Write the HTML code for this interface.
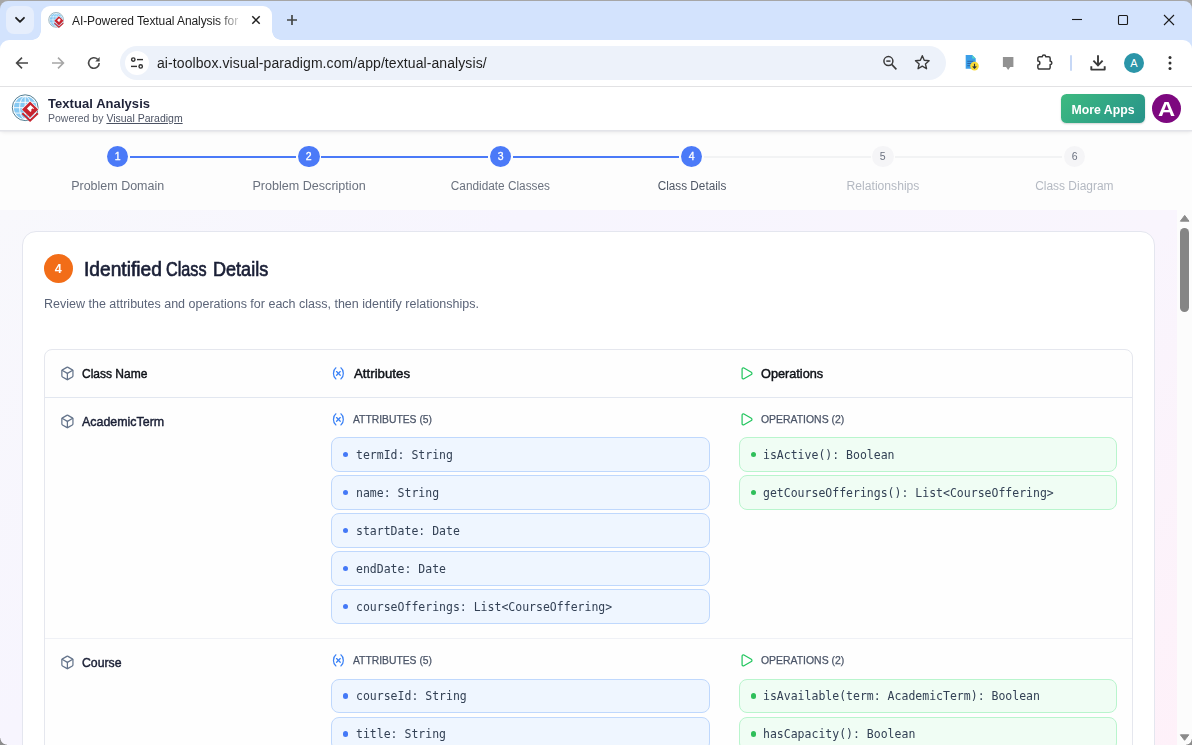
<!DOCTYPE html>
<html lang="en">
<head>
<meta charset="utf-8">
<title>AI-Powered Textual Analysis for</title>
<style>
*{box-sizing:border-box;margin:0;padding:0}
html,body{width:1192px;height:745px;overflow:hidden;background:#fff}
body{font-family:"Liberation Sans",sans-serif;color:#1f2937;position:relative}
.abs{position:absolute}
#tabtitle,#url,#apptitle,#appsub,#moretxt,#avtxt,.sn,.slab,#badgetxt,#h1,#desc,.th,.cn,.sub{will-change:transform}
/* ---------- browser chrome ---------- */
#tabstrip{left:0;top:1px;width:1192px;height:52px;background:#d3e3fd;border-radius:8px 8px 0 0}
#tabsearch{left:6px;top:6px;width:28px;height:28px;border-radius:8px;background:#e6eefc}
#tab{left:40.5px;top:6px;width:231px;height:34px;background:#fff;border-radius:9px 9px 0 0}
#tab:before,#tab:after{content:"";position:absolute;bottom:0;width:9px;height:9px}
#tab:before{left:-9px;background:radial-gradient(circle at 0 0,rgba(255,255,255,0) 8.5px,#fff 9px)}
#tab:after{right:-9px;background:radial-gradient(circle at 100% 0,rgba(255,255,255,0) 8.5px,#fff 9px)}
#tabtitle{left:71.7px;top:10.9px;line-height:20px;font-size:12px;letter-spacing:-.08px;color:#1f1f1f;white-space:nowrap;width:168px;overflow:hidden;-webkit-mask-image:linear-gradient(90deg,#000 0,#000 146px,rgba(0,0,0,.15) 168px);mask-image:linear-gradient(90deg,#000 0,#000 146px,rgba(0,0,0,.15) 168px)}
#toolbar{left:0;top:40px;width:1192px;height:46px;background:#fff;border-radius:9px 9px 0 0}
#tbline{left:0;top:86px;width:1192px;height:1px;background:#e2e2e4}
#omni{left:119.8px;top:46px;width:826.2px;height:34px;border-radius:17px;background:#edf2fa}
#sitebtn{left:124.8px;top:50.8px;width:24.2px;height:24.2px;border-radius:12.1px;background:#fff}
#url{left:157px;top:52.6px;line-height:20px;font-size:14px;color:#1f1f1f;white-space:nowrap;letter-spacing:.085px}
/* ---------- app header ---------- */
#apphead{left:0;top:87px;width:1192px;height:42.6px;background:#fff;box-shadow:0 1.5px 0 #e3e4e9,0 3px 4px -1px rgba(0,0,0,.10)}
#apptitle{left:48.4px;top:93.7px;line-height:20px;font-size:13px;font-weight:bold;color:#1e2238;white-space:nowrap;letter-spacing:.06px}
#appsub{left:48.4px;top:107.9px;line-height:20px;font-size:10.5px;color:#5b6170;white-space:nowrap}
#appsub u{color:#4b5263}
#moreapps{left:1061px;top:94px;width:84px;height:29px;border-radius:5.5px;background:linear-gradient(135deg,#3dba80,#27938a);box-shadow:0 1px 2px rgba(0,0,0,.18)}
#moretxt{left:1061px;width:84px;top:99.9px;line-height:20px;color:#fff;font-weight:bold;font-size:12.3px;text-align:center;white-space:nowrap}
#avatar{left:1152px;top:94px;width:29px;height:29px;border-radius:15px;background:#7d087f}
#avtxt{left:1152px;width:29px;top:99px;line-height:20px;color:#fff;font-weight:bold;font-size:21px;text-align:center;transform:scaleX(1.13)}
/* ---------- stepper ---------- */
#stepper{left:0;top:129px;width:1192px;height:81px;background:#fdfdfd}
.sx{display:inline-block;transform-origin:50% 50%;white-space:nowrap}
.sx.l{transform-origin:0 50%}
.sc{width:21.4px;height:21.4px;border-radius:11px;top:145.7px}
.sc.on{background:#4b7af8}
.sc.off{background:#f5f5f7}
.sn{width:21.4px;top:146px;line-height:20px;font-size:10.5px;text-align:center}
.sn.on{color:#fff;-webkit-text-stroke:.3px #fff}
.sn.off{color:#6b7280}
.sl{height:2px;top:155.9px}
.sl.on{background:#4b7af8}
.sl.off{background:#f2f3f4;top:156.2px;height:1.5px}
.slab{top:175.6px;width:160px;line-height:20px;text-align:center;font-size:12px;white-space:nowrap}
.slab.on{color:#6a717e}
.slab.cur{color:#4f5765}
.slab.off{color:#b4b9c2}
/* ---------- content ---------- */
#content{left:0;top:210px;width:1177px;height:535px;background:linear-gradient(135deg,#f8f8fc 0%,#f7f5fe 31%,#f9f5fd 69%,#fef1f9 100%)}
#card{left:22.4px;top:231.4px;width:1132.8px;height:540px;background:#fff;border:1px solid #e4e6ef;border-radius:14px}
#badge{left:44.2px;top:254.2px;width:28.6px;height:28.6px;border-radius:15px;background:#f26d18}
#badgetxt{left:44.2px;width:28.6px;top:258.7px;line-height:20px;color:#fff;font-weight:bold;font-size:12.5px;text-align:center}
#h1{left:84.3px;top:258.9px;line-height:20px;font-size:19.5px;color:#1a1f36;-webkit-text-stroke:.65px #1a1f36;white-space:nowrap}
#desc{left:44.4px;top:294.1px;line-height:20px;font-size:12.5px;color:#5b6478;white-space:nowrap}
#table{left:44.4px;top:349.4px;width:1088.4px;height:420px;border:1px solid #e5e7ee;border-radius:8px 8px 0 0;background:#fefefe}
.hline{left:45.4px;width:1086.4px;height:1px;background:#e2e7f0}
.th,.cn{line-height:20px;font-size:13px;color:#0f1218;-webkit-text-stroke:.45px #0f1218;white-space:nowrap}
.cn{color:#1b2036;-webkit-text-stroke:.45px #1b2036}
.sub{line-height:20px;font-size:11px;color:#4a5467;-webkit-text-stroke:.25px #4a5467;white-space:nowrap}
.pill{height:34.5px;border-radius:8px;font-family:"DejaVu Sans Mono","Liberation Mono",monospace;font-size:11.5px;color:#334155;white-space:nowrap}
.pill.a{left:331px;width:378.8px;background:#eff6ff;border:1px solid #bfd8fd}
.pill.o{left:739px;width:378px;background:#f0fdf4;border:1px solid #b9f5cd}
.pill i{position:absolute;left:10.8px;top:13.8px;width:5.4px;height:5.4px;border-radius:3px}
.pill.a i{background:#4479f7}
.pill.o i{background:#2fbf5a}
.pill span{position:absolute;left:24px;top:6.9px;line-height:20px;will-change:transform}
.pill.o span{left:23px}
/* ---------- scrollbar ---------- */
#sbar{left:1177px;top:210px;width:15px;height:535px;background:#fcfcfc}
#sthumb{left:1180.2px;top:228.3px;width:9px;height:83.6px;border-radius:4.5px;background:#858585}
svg{position:absolute;overflow:visible}
</style>
</head>
<body>
<!-- browser chrome -->
<div class="abs" style="left:0;top:0;width:1192px;height:40px;background:#a6a6a6"></div>
<div id="tabstrip" class="abs"></div>
<div id="tabsearch" class="abs"></div>
<div id="toolbar" class="abs"></div>
<div id="tab" class="abs"></div>
<div id="tabtitle" class="abs">AI-Powered Textual Analysis for</div>
<div id="tbline" class="abs"></div>
<div id="omni" class="abs"></div>
<div id="sitebtn" class="abs"></div>
<div id="url" class="abs">ai-toolbox.visual-paradigm.com/app/textual-analysis/</div>


<!-- chrome icons -->
<svg width="0" height="0" style="position:absolute">
  <defs>
    <symbol id="vplogo" viewBox="0 0 28 28">
      <circle cx="14.2" cy="13.7" r="11.3" fill="#86c9f3"/>
      <g stroke="#fff" stroke-width="0.9" fill="none">
        <path d="M2.900 13.700H25.500M14.200 2.400V25"/>
        <path d="M4.200 8.300H24.200M4.200 19.100H24.200"/>
        <ellipse cx="14.200" cy="13.700" rx="5.600" ry="11.300"/>
      </g>
      <circle cx="14.200" cy="13.700" r="12.900" fill="none" stroke="#3f6f86" stroke-width="0.9"/>
      <path d="M19.100 6.800 L27.900 15.300 L19.100 23.800 L10.300 15.300Z" fill="#fff"/>
      <path d="M19.100 7.500 L27.200 15.500 L19.100 23.600 L11 15.500Z" fill="#c8242f"/>
      <path d="M19.500 10.900 L23.100 14.500 L19.500 18.100 L15.900 14.500Z" fill="#fff"/>
      <path d="M21.700 14.200 L23.500 16 L21.700 17.800 L19.900 16Z" fill="#c8242f"/>
      <path d="M11.300 19.300 L19.100 26.600 L26.900 19.300" fill="none" stroke="#c8242f" stroke-width="1.900"/>
    </symbol>
  </defs>
</svg>
<!-- tab search chevron -->
<svg style="left:14px;top:16px" width="12" height="8" viewBox="0 0 12 8"><path d="M2 1.8 6 5.8 10 1.8" fill="none" stroke="#1f1f1f" stroke-width="1.8" stroke-linecap="round" stroke-linejoin="round"/></svg>
<!-- favicon -->
<svg style="left:48px;top:12px" width="16" height="16"><use href="#vplogo"/></svg>
<!-- tab close -->
<svg style="left:251px;top:15px" width="10" height="10" viewBox="0 0 10 10"><path d="M1.3 1.3 8.7 8.7M8.7 1.3 1.3 8.7" stroke="#1f1f1f" stroke-width="1.5" fill="none"/></svg>
<!-- new tab -->
<svg style="left:286px;top:14px" width="12" height="12" viewBox="0 0 12 12"><path d="M6 1V11M1 6H11" stroke="#444746" stroke-width="1.7" fill="none"/></svg>
<!-- window controls -->
<svg style="left:1071px;top:14px" width="12" height="12" viewBox="0 0 12 12"><path d="M1 5.5H11" stroke="#1b1b1b" stroke-width="1.1"/></svg>
<svg style="left:1117px;top:14px" width="12" height="12" viewBox="0 0 12 12"><rect x="1.5" y="1.5" width="9" height="9" rx="1" fill="none" stroke="#1b1b1b" stroke-width="1.1"/></svg>
<svg style="left:1163px;top:14px" width="12" height="12" viewBox="0 0 12 12"><path d="M1 1 11 11M11 1 1 11" stroke="#1b1b1b" stroke-width="1.1"/></svg>
<!-- back -->
<svg style="left:14px;top:55px" width="16" height="16" viewBox="0 0 16 16"><path d="M14 8H3M8 2.6 2.6 8 8 13.4" fill="none" stroke="#474747" stroke-width="1.6"/></svg>
<!-- forward -->
<svg style="left:50px;top:55px" width="16" height="16" viewBox="0 0 16 16"><path d="M2 8H13M8 2.6 13.4 8 8 13.4" fill="none" stroke="#a6a6a6" stroke-width="1.6"/></svg>
<!-- reload -->
<svg style="left:86px;top:55px" width="16" height="16" viewBox="0 0 16 16"><path d="M13.2 8A5.3 5.3 0 1 1 11.6 4.2" fill="none" stroke="#474747" stroke-width="1.6"/><path d="M13.6 2V6.4H9.2Z" fill="#474747"/></svg>
<!-- site info (tune) -->
<svg style="left:129.900px;top:55.900px" width="14" height="14" viewBox="0 0 14 14"><g fill="none" stroke="#303030" stroke-width="1.4"><circle cx="3.3" cy="3.6" r="1.7"/><path d="M7 3.6H13"/><circle cx="10.7" cy="10.4" r="1.7"/><path d="M1 10.4H7"/></g></svg>
<!-- zoom -->
<svg style="left:880px;top:53px" width="20" height="20" viewBox="0 0 20 20"><circle cx="8.400" cy="8.100" r="4.500" fill="none" stroke="#3a3a3a" stroke-width="1.500"/><path d="M11.700 11.400 16.400 16.400" stroke="#3a3a3a" stroke-width="1.600"/><path d="M6.300 8.100H10.500" stroke="#3a3a3a" stroke-width="1.500"/></svg>
<!-- star -->
<svg style="left:913.700px;top:54.200px" width="16.600" height="16.600" viewBox="0 0 18 18"><path d="M9 1.900 11.100 6.800 16.400 7.300 12.400 10.800 13.600 16 9 13.200 4.400 16 5.600 10.800 1.600 7.300 6.900 6.800Z" fill="none" stroke="#3a3a3a" stroke-width="1.500" stroke-linejoin="round"/></svg>
<!-- doc extension -->
<svg style="left:963px;top:54px" width="18" height="18" viewBox="0 0 18 18"><path d="M2.700 1.100H9.200L12.700 4.600V14.700H2.700Z" fill="#3b9fe8"/><path d="M9.200 1.100 12.700 4.600H9.200Z" fill="#57d6c6"/><path d="M4.300 7.300H10.300M4.300 9.500H10.300M4.300 11.700H7.500" stroke="#2c64a8" stroke-width="1"/><circle cx="11.500" cy="12.100" r="4.300" fill="#f8db3a"/><path d="M11.500 9.700V14M9.700 12.300 11.500 14.100 13.300 12.300" fill="none" stroke="#26323c" stroke-width="1.100"/></svg>
<!-- grey bubble extension -->
<svg style="left:1000px;top:54px" width="16" height="18" viewBox="0 0 16 18"><path d="M2.900 2.900H13.400V13.100H10.200L8.150 16 6.100 13.100H2.900Z" fill="#929292"/></svg>
<!-- puzzle -->
<svg style="left:1036px;top:54px" width="18" height="18" viewBox="0 0 18 18"><path d="M1.850 4.300a1.500 1.500 0 0 1 1.500-1.500H6.300a1.700 1.700 0 0 1 3.400 0H12.650a1.500 1.500 0 0 1 1.500 1.500V7.200a1.700 1.700 0 0 1 0 3.400V13.550a1.500 1.500 0 0 1-1.500 1.500H3.350a1.500 1.500 0 0 1-1.500-1.500V10.900a2 2 0 0 0 0-4Z" fill="none" stroke="#3a3a3a" stroke-width="1.500" stroke-linejoin="round"/></svg>
<!-- divider -->
<div class="abs" style="left:1070px;top:54.600px;width:2px;height:16px;background:#c7d8f6;border-radius:1px"></div>
<!-- download -->
<svg style="left:1089px;top:54px" width="18" height="18" viewBox="0 0 18 18"><path d="M9 1.300V11M4.400 6.700 9 11.300 13.600 6.700" fill="none" stroke="#3a3a3a" stroke-width="1.900"/><path d="M2.300 12.300V15.600H15.700V12.300" fill="none" stroke="#3a3a3a" stroke-width="1.900" stroke-linejoin="round"/></svg>
<!-- profile -->
<div class="abs" style="left:1124px;top:53px;width:20px;height:20px;border-radius:10px;background:#2b95a8;color:#fff;font-size:11px;line-height:20.500px;text-align:center">A</div>
<!-- kebab -->
<svg style="left:1166px;top:55px" width="8" height="16" viewBox="0 0 8 16"><circle cx="4" cy="2.600" r="1.500" fill="#303030"/><circle cx="4" cy="8" r="1.500" fill="#303030"/><circle cx="4" cy="13.400" r="1.500" fill="#303030"/></svg>

<!-- app header -->
<div id="stepper" class="abs"></div>
<div id="apphead" class="abs"></div>
<div id="apptitle" class="abs">Textual Analysis</div>
<div id="appsub" class="abs">Powered by <u>Visual Paradigm</u></div>
<div id="moreapps" class="abs"></div><div id="moretxt" class="abs">More Apps</div>
<div id="avatar" class="abs"></div><div id="avtxt" class="abs">A</div>
<!-- app logo -->
<svg style="left:11px;top:94px" width="28" height="28"><use href="#vplogo"/></svg>

<!-- stepper -->
<div class="abs sl on" style="left:129.9px;width:166.6px"></div>
<div class="abs sl on" style="left:321.3px;width:166.6px"></div>
<div class="abs sl on" style="left:512.7px;width:166.6px"></div>
<div class="abs sl off" style="left:704.1px;width:166.6px"></div>
<div class="abs sl off" style="left:895.4px;width:166.6px"></div>
<div class="abs sc on" style="left:106.8px"></div><div class="abs sn on" style="left:106.8px">1</div>
<div class="abs sc on" style="left:298.2px"></div><div class="abs sn on" style="left:298.2px">2</div>
<div class="abs sc on" style="left:489.6px"></div><div class="abs sn on" style="left:489.6px">3</div>
<div class="abs sc on" style="left:681.0px"></div><div class="abs sn on" style="left:681.0px">4</div>
<div class="abs sc off" style="left:872.3px"></div><div class="abs sn off" style="left:872.3px">5</div>
<div class="abs sc off" style="left:1063.7px"></div><div class="abs sn off" style="left:1063.7px">6</div>
<div class="abs slab on" style="left:37.5px"><span class="sx" style="transform:scaleX(1.041)">Problem Domain</span></div>
<div class="abs slab on" style="left:228.9px"><span class="sx" style="transform:scaleX(1.048)">Problem Description</span></div>
<div class="abs slab on" style="left:420.3px"><span class="sx" style="transform:scaleX(0.984)">Candidate Classes</span></div>
<div class="abs slab on cur" style="left:611.7px"><span class="sx" style="transform:scaleX(0.980)">Class Details</span></div>
<div class="abs slab off" style="left:803.0px"><span class="sx" style="transform:scaleX(1.011)">Relationships</span></div>
<div class="abs slab off" style="left:994.4px"><span class="sx" style="transform:scaleX(0.996)">Class Diagram</span></div>

<!-- content -->
<div id="content" class="abs"></div>
<div id="card" class="abs"></div>
<div id="badge" class="abs"></div><div id="badgetxt" class="abs">4</div>
<div id="h1" class="abs"><span class="sx l" style="position:absolute;left:-0.3px;transform:scaleX(.983)">Identified</span> <span class="sx l" style="position:absolute;left:82.4px;transform:scaleX(.83)">Class</span> <span class="sx l" style="position:absolute;left:128.6px;transform:scaleX(.926)">Details</span></div>
<div id="desc" class="abs">Review the attributes and operations for each class, then identify relationships.</div>
<div id="table" class="abs"></div>
<div class="abs hline" style="top:397px"></div>
<div class="abs hline" style="top:638px;background:#eff1f6"></div>

<svg style="left:59.75px;top:365.70px" width="14.8" height="14.8" viewBox="0 0 24 24" fill="none" stroke="#64748b" stroke-width="2" stroke-linecap="round" stroke-linejoin="round"><path d="M21 8a2 2 0 0 0-1-1.730l-7-4a2 2 0 0 0-2 0l-7 4A2 2 0 0 0 3 8v8a2 2 0 0 0 1 1.730l7 4a2 2 0 0 0 2 0l7-4A2 2 0 0 0 21 16Z"/><path d="m3.300 7 8.700 5 8.700-5"/><path d="M12 22V12"/></svg>
<svg style="left:330.85px;top:365.50px" width="14.8" height="14.8" viewBox="0 0 24 24" fill="none" stroke="#3b82f6" stroke-width="2" stroke-linecap="round" stroke-linejoin="round"><path d="M8 21s-4-3-4-9 4-9 4-9"/><path d="M16 3s4 3 4 9-4 9-4 9"/><path d="M15 9 9 15"/><path d="M9 9 15 15"/></svg>
<svg style="left:738.90px;top:365.60px" width="14.8" height="14.8" viewBox="0 0 24 24" fill="none" stroke="#22c55e" stroke-width="2" stroke-linecap="round" stroke-linejoin="round"><path d="M5 5a2 2 0 0 1 3.008-1.728l11.997 6.998a2 2 0 0 1 .003 3.458l-12 7A2 2 0 0 1 5 19z"/></svg>
<div class="abs th" style="left:81.7px;top:364.1px"><span class="sx l" style="transform:scaleX(0.924)">Class Name</span></div>
<div class="abs th" style="left:353.5px;top:364.1px"><span class="sx l" style="transform:scaleX(1.020)">Attributes</span></div>
<div class="abs th" style="left:760.7px;top:364.1px"><span class="sx l" style="transform:scaleX(0.978)">Operations</span></div>
<svg style="left:59.75px;top:413.60px" width="14.8" height="14.8" viewBox="0 0 24 24" fill="none" stroke="#64748b" stroke-width="2" stroke-linecap="round" stroke-linejoin="round"><path d="M21 8a2 2 0 0 0-1-1.730l-7-4a2 2 0 0 0-2 0l-7 4A2 2 0 0 0 3 8v8a2 2 0 0 0 1 1.730l7 4a2 2 0 0 0 2 0l7-4A2 2 0 0 0 21 16Z"/><path d="m3.300 7 8.700 5 8.700-5"/><path d="M12 22V12"/></svg>
<svg style="left:330.80px;top:411.60px" width="14.8" height="14.8" viewBox="0 0 24 24" fill="none" stroke="#3b82f6" stroke-width="2" stroke-linecap="round" stroke-linejoin="round"><path d="M8 21s-4-3-4-9 4-9 4-9"/><path d="M16 3s4 3 4 9-4 9-4 9"/><path d="M15 9 9 15"/><path d="M9 9 15 15"/></svg>
<svg style="left:738.90px;top:411.60px" width="14.8" height="14.8" viewBox="0 0 24 24" fill="none" stroke="#22c55e" stroke-width="2" stroke-linecap="round" stroke-linejoin="round"><path d="M5 5a2 2 0 0 1 3.008-1.728l11.997 6.998a2 2 0 0 1 .003 3.458l-12 7A2 2 0 0 1 5 19z"/></svg>
<div class="abs cn" style="left:81.7px;top:411.7px"><span class="sx l" style="transform:scaleX(0.956)">AcademicTerm</span></div>
<div class="abs sub" style="left:353.3px;top:409.1px"><span class="sx l" style="transform:scaleX(0.939)">ATTRIBUTES (5)</span></div>
<div class="abs sub" style="left:760.5px;top:409.1px"><span class="sx l" style="transform:scaleX(0.948)">OPERATIONS (2)</span></div>
<div class="abs pill a" style="top:437.00px"><i></i><span>termId: String</span></div>
<div class="abs pill a" style="top:475.00px"><i></i><span>name: String</span></div>
<div class="abs pill a" style="top:513.00px"><i></i><span>startDate: Date</span></div>
<div class="abs pill a" style="top:551.00px"><i></i><span>endDate: Date</span></div>
<div class="abs pill a" style="top:589.00px"><i></i><span>courseOfferings: List&lt;CourseOffering&gt;</span></div>
<div class="abs pill o" style="top:437.00px"><i></i><span>isActive(): Boolean</span></div>
<div class="abs pill o" style="top:475.00px"><i></i><span>getCourseOfferings(): List&lt;CourseOffering&gt;</span></div>
<svg style="left:59.75px;top:655.10px" width="14.8" height="14.8" viewBox="0 0 24 24" fill="none" stroke="#64748b" stroke-width="2" stroke-linecap="round" stroke-linejoin="round"><path d="M21 8a2 2 0 0 0-1-1.730l-7-4a2 2 0 0 0-2 0l-7 4A2 2 0 0 0 3 8v8a2 2 0 0 0 1 1.730l7 4a2 2 0 0 0 2 0l7-4A2 2 0 0 0 21 16Z"/><path d="m3.300 7 8.700 5 8.700-5"/><path d="M12 22V12"/></svg>
<svg style="left:330.80px;top:653.10px" width="14.8" height="14.8" viewBox="0 0 24 24" fill="none" stroke="#3b82f6" stroke-width="2" stroke-linecap="round" stroke-linejoin="round"><path d="M8 21s-4-3-4-9 4-9 4-9"/><path d="M16 3s4 3 4 9-4 9-4 9"/><path d="M15 9 9 15"/><path d="M9 9 15 15"/></svg>
<svg style="left:738.90px;top:653.10px" width="14.8" height="14.8" viewBox="0 0 24 24" fill="none" stroke="#22c55e" stroke-width="2" stroke-linecap="round" stroke-linejoin="round"><path d="M5 5a2 2 0 0 1 3.008-1.728l11.997 6.998a2 2 0 0 1 .003 3.458l-12 7A2 2 0 0 1 5 19z"/></svg>
<div class="abs cn" style="left:81.7px;top:653.20px"><span class="sx l" style="transform:scaleX(0.943)">Course</span></div>
<div class="abs sub" style="left:353.3px;top:649.90px"><span class="sx l" style="transform:scaleX(0.939)">ATTRIBUTES (5)</span></div>
<div class="abs sub" style="left:760.5px;top:649.90px"><span class="sx l" style="transform:scaleX(0.948)">OPERATIONS (2)</span></div>
<div class="abs pill a" style="top:678.60px"><i></i><span>courseId: String</span></div>
<div class="abs pill a" style="top:716.60px"><i></i><span>title: String</span></div>
<div class="abs pill o" style="top:678.60px"><i></i><span>isAvailable(term: AcademicTerm): Boolean</span></div>
<div class="abs pill o" style="top:716.60px"><i></i><span>hasCapacity(): Boolean</span></div>

<!-- scrollbar -->
<div id="sbar" class="abs"></div>
<div id="sthumb" class="abs"></div>
<svg style="left:1177px;top:210px" width="15" height="535" viewBox="0 0 15 535"><path d="M3.400 11.200 7.700 5.400 12 11.200Z" fill="#8a8a8a" stroke="#8a8a8a" stroke-width="1" stroke-linejoin="round"/><path d="M3.400 524.800 7.600 530.300 11.800 524.800Z" fill="#8a8a8a" stroke="#8a8a8a" stroke-width="1" stroke-linejoin="round"/></svg>
<div class="abs" style="left:0;top:738px;width:7px;height:7px;background:radial-gradient(circle at 100% 0,rgba(141,141,141,0) 6.200px,#8d8d8d 7px)"></div>
<div class="abs" style="left:1186px;top:739px;width:6px;height:6px;background:radial-gradient(circle at 0 0,rgba(141,141,141,0) 5.200px,#8d8d8d 6px)"></div>
</body>
</html>
